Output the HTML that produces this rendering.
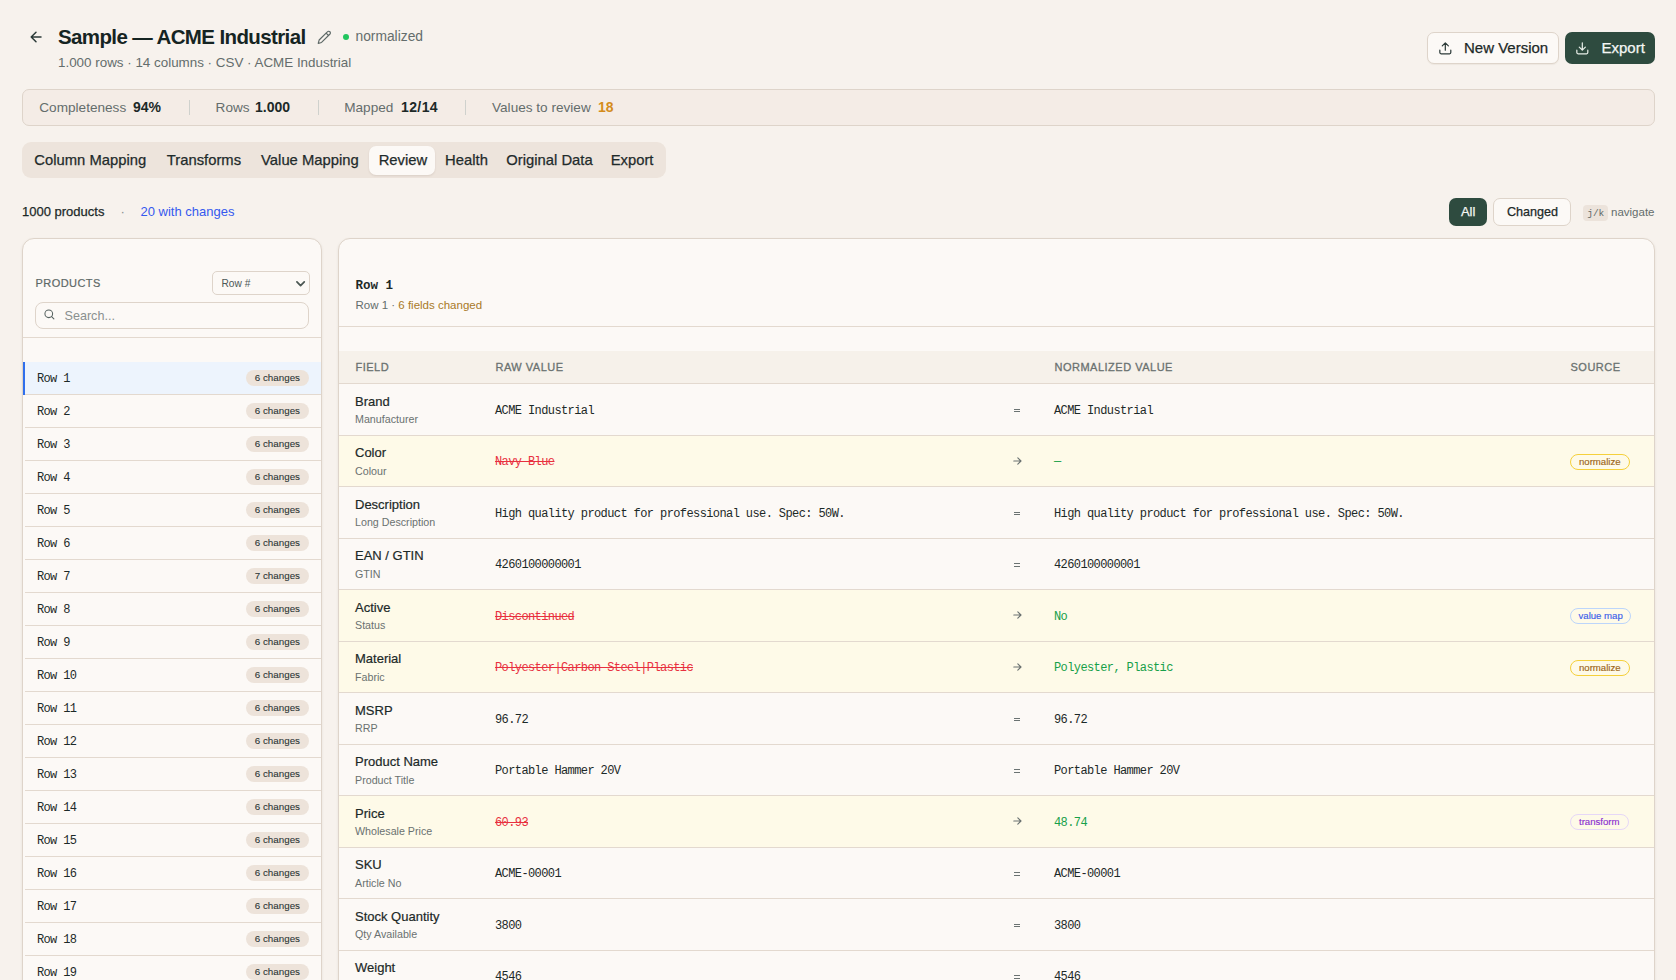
<!DOCTYPE html>
<html><head><meta charset="utf-8">
<style>
*{box-sizing:border-box;margin:0;padding:0}
html,body{width:1676px;height:980px;overflow:hidden;background:#f7f2ed;font-family:"Liberation Sans",sans-serif;color:#1c2928}
.abs{position:absolute}
.t{position:absolute;white-space:pre;line-height:20px}
.med{-webkit-text-stroke:0.25px currentColor}
.mono{font-family:"Liberation Mono",monospace}
svg{position:absolute;overflow:visible}
/* stats */
.stats{left:22px;top:89px;width:1633px;height:37px;background:#f4ece6;border:1px solid #ded4ca;border-radius:7px}
.sdiv{position:absolute;top:9.5px;width:1px;height:15.5px;background:#cfd1cd}
/* tabs */
.tabs{left:22px;top:142px;width:644px;height:36px;background:#ede4dc;border-radius:9px}
.tab{position:absolute;-webkit-text-stroke:.25px currentColor;top:4px;height:29px;font-size:14.8px;line-height:29px;white-space:pre;color:#1f2b2b}
.btn{position:absolute;border-radius:7px}
.panel{background:#fcf9f6;border:1px solid #ded4ca;border-radius:12px;overflow:hidden;box-shadow:0 1px 3px rgba(70,50,30,.08)}
.lrow{position:absolute;left:2px;width:296px;height:33px;border-bottom:1px solid #e3d9cf}
.lrow .n{position:absolute;left:12px;top:1px;line-height:32px;font-size:12px;letter-spacing:-0.65px;font-family:"Liberation Mono",monospace;color:#1c2928}
.lrow .b{position:absolute;-webkit-text-stroke:.08px currentColor;right:12px;top:8px;height:16px;line-height:16px;padding:0 9px;border-radius:8px;background:#ede3da;font-size:9.8px;color:#2a3434}
.row{position:absolute;left:0;width:1315px;height:51.5px;border-top:1px solid #e3d9cf}
.row.hl{background:#fefae8}
.row .l{position:absolute;-webkit-text-stroke:.2px currentColor;left:16px;top:9.6px;font-size:13px;line-height:16px;color:#1c2928}
.row .s{position:absolute;left:16px;top:29.4px;font-size:10.7px;line-height:12px;color:#6a7170}
.row .v{position:absolute;top:18.6px;left:156px;font-size:12px;letter-spacing:-0.6px;line-height:16px;font-family:"Liberation Mono",monospace;color:#1c2928}
.row .nv{position:absolute;top:18.6px;left:715px;font-size:12px;letter-spacing:-0.6px;line-height:16px;font-family:"Liberation Mono",monospace;color:#1c2928}
.row .eq{position:absolute;top:20.3px;left:674px;font-size:11px;line-height:16px;font-family:"Liberation Mono",monospace;color:#6a7170}
.row .del{color:#e8303f;text-decoration:line-through}
.row .add{color:#17a04a}
.badge{position:absolute;left:1231px;top:18px;height:16px;line-height:14px;border-radius:8px;padding:0 8px;font-size:9.6px;border:1px solid;-webkit-text-stroke:.15px currentColor}
.hdr{position:absolute;font-size:11px;-webkit-text-stroke:.3px currentColor;letter-spacing:.5px;color:#6a7170;line-height:14px;top:9px}
</style></head><body>

<!-- header -->
<svg style="left:30px;top:31px" width="12" height="12" viewBox="0 0 12 12"><path d="M11 6H1.2M6 1.2L1.2 6L6 10.8" fill="none" stroke="#2c3a38" stroke-width="1.5" stroke-linecap="round" stroke-linejoin="round"/></svg>
<div class="t" style="left:58px;top:26.7px;font-size:20.5px;line-height:20px;font-weight:700;letter-spacing:-0.62px;color:#152422">Sample — ACME Industrial</div>
<svg style="left:317px;top:29.6px" width="14.6" height="14.6" viewBox="0 0 24 24"><path d="M17 3a2.85 2.83 0 1 1 4 4L7.5 20.5 2 22l1.5-5.5Z M15 5l4 4" fill="none" stroke="#5d6866" stroke-width="1.9" stroke-linecap="round" stroke-linejoin="round"/></svg>
<div class="abs" style="left:343px;top:34px;width:6px;height:6px;border-radius:3px;background:#22c55e"></div>
<div class="t" style="left:355.5px;top:26.5px;font-size:13.8px;color:#646d6c">normalized</div>
<div class="t" style="left:58px;top:53.1px;font-size:13.4px;color:#646d6c">1.000 rows · 14 columns · CSV · ACME Industrial</div>

<div class="btn" style="left:1427px;top:32px;width:132px;height:32px;background:#fcf9f6;border:1px solid #ded4ca;box-shadow:0 1px 1px rgba(80,60,40,.06)"></div>
<svg style="left:1437.98px;top:40.78px" width="14.64" height="14.64" viewBox="0 0 24 24"><path d="M21 15v4a2 2 0 0 1-2 2H5a2 2 0 0 1-2-2v-4M17 8l-5-5-5 5M12 3v12" fill="none" stroke="#2c3a38" stroke-width="2" stroke-linecap="round" stroke-linejoin="round"/></svg>
<div class="t med" style="left:1464px;top:37.7px;font-size:15px;color:#1c2928">New Version</div>
<div class="btn" style="left:1565px;top:32px;width:90px;height:32px;background:#2e4b3f"></div>
<svg style="left:1575.08px;top:40.78px" width="14.64" height="14.64" viewBox="0 0 24 24"><path d="M21 15v4a2 2 0 0 1-2 2H5a2 2 0 0 1-2-2v-4M7 10l5 5 5-5M12 15V3" fill="none" stroke="#e8efe9" stroke-width="2" stroke-linecap="round" stroke-linejoin="round"/></svg>
<div class="t med" style="left:1601.5px;top:37.7px;font-size:15px;color:#f4f7f4">Export</div>

<!-- stats bar -->
<div class="abs stats">
  <div class="t" style="left:16.3px;top:7.5px;font-size:13.6px;color:#646d6c">Completeness</div>
  <div class="t" style="left:110px;top:7.3px;font-size:14px;font-weight:700;color:#1c2928">94%</div>
  <div class="sdiv" style="left:166px"></div>
  <div class="t" style="left:192.6px;top:7.5px;font-size:13.6px;color:#646d6c">Rows</div>
  <div class="t" style="left:232px;top:7.3px;font-size:14px;font-weight:700;color:#1c2928">1.000</div>
  <div class="sdiv" style="left:295px"></div>
  <div class="t" style="left:321.2px;top:7.5px;font-size:13.6px;color:#646d6c">Mapped</div>
  <div class="t" style="left:378px;top:7.3px;font-size:14px;font-weight:700;color:#1c2928;letter-spacing:.4px">12/14</div>
  <div class="sdiv" style="left:442px"></div>
  <div class="t" style="left:469px;top:7.5px;font-size:13.6px;color:#646d6c">Values to review</div>
  <div class="t" style="left:575px;top:7.3px;font-size:14px;font-weight:700;color:#d48c1c">18</div>
</div>

<!-- tabs -->
<div class="abs tabs">
  <div class="abs" style="left:347px;top:4px;width:66px;height:29px;background:#fcf9f6;border-radius:7px;box-shadow:0 1px 2px rgba(80,60,40,.12)"></div>
  <div class="tab" style="left:12.3px">Column Mapping</div>
  <div class="tab" style="left:144.8px">Transforms</div>
  <div class="tab" style="left:239.1px">Value Mapping</div>
  <div class="tab" style="left:356.7px">Review</div>
  <div class="tab" style="left:423.1px">Health</div>
  <div class="tab" style="left:484.3px">Original Data</div>
  <div class="tab" style="left:588.7px">Export</div>
</div>

<!-- products line -->
<div class="t med" style="left:22px;top:201.5px;font-size:13px;color:#1c2928">1000 products</div>
<div class="t" style="left:120.5px;top:201.5px;font-size:13px;color:#8b9190">·</div>
<div class="t" style="left:140.5px;top:201.5px;font-size:13px;color:#3559ef">20 with changes</div>

<div class="btn" style="left:1449px;top:198px;width:38px;height:28px;background:#2e4b3f;border-radius:7px"></div>
<div class="t med" style="left:1460.9px;top:201.5px;font-size:13px;color:#f4f7f4">All</div>
<div class="btn" style="left:1493px;top:198px;width:78px;height:28px;background:#fcf9f6;border:1px solid #ded4ca;border-radius:7px"></div>
<div class="t med" style="left:1507px;top:201.5px;font-size:12.6px;color:#1c2928">Changed</div>
<div class="abs" style="left:1583px;top:205px;width:25px;height:16px;background:#ece3db;border-radius:4px"></div>
<div class="t mono" style="left:1587.2px;top:203.8px;font-size:9.5px;color:#5d6866">j/k</div>
<div class="t" style="left:1611px;top:201.7px;font-size:11.5px;color:#646d6c">navigate</div>

<!-- left panel -->
<div class="abs panel" style="left:22px;top:238px;width:300px;height:760px">
  <div class="t" style="left:12.5px;top:34px;font-size:11px;-webkit-text-stroke:.2px currentColor;letter-spacing:.45px;color:#5d6866">PRODUCTS</div>
  <div class="abs" style="left:189.3px;top:32px;width:97.3px;height:24px;border:1px solid #ded4ca;border-radius:5px;background:#fcf9f6"></div>
  <div class="t" style="left:198.5px;top:35px;font-size:10.2px;color:#4d5856">Row #</div>
  <svg style="left:272.6px;top:41.6px" width="9.2" height="5.6" viewBox="0 0 10 6"><path d="M1 1l4 4 4-4" fill="none" stroke="#4b5753" stroke-width="1.9" stroke-linecap="round" stroke-linejoin="round"/></svg>
  <div class="abs" style="left:12.2px;top:62.5px;width:273.4px;height:27.5px;border:1px solid #ded4ca;border-radius:8px;background:#fcf9f6"></div>
  <svg style="left:21.2px;top:70.4px" width="11" height="11" viewBox="0 0 12 12"><circle cx="5.2" cy="5.2" r="4.2" fill="none" stroke="#55615f" stroke-width="1.15"/><path d="M8.3 8.3l2.5 2.5" stroke="#55615f" stroke-width="1.15" stroke-linecap="round"/></svg>
  <div class="t" style="left:41.5px;top:66.6px;font-size:12.6px;color:#8a908f">Search...</div>
  <div class="abs" style="left:0;top:98px;width:300px;height:1px;background:#e3d9cf"></div>
  <div class="lrow" style="top:123px;background:#edf4fd;box-shadow:-2px 0 0 #2f6fec"><div class="n">Row 1</div><div class="b">6 changes</div></div>
<div class="lrow" style="top:156px"><div class="n">Row 2</div><div class="b">6 changes</div></div>
<div class="lrow" style="top:189px"><div class="n">Row 3</div><div class="b">6 changes</div></div>
<div class="lrow" style="top:222px"><div class="n">Row 4</div><div class="b">6 changes</div></div>
<div class="lrow" style="top:255px"><div class="n">Row 5</div><div class="b">6 changes</div></div>
<div class="lrow" style="top:288px"><div class="n">Row 6</div><div class="b">6 changes</div></div>
<div class="lrow" style="top:321px"><div class="n">Row 7</div><div class="b">7 changes</div></div>
<div class="lrow" style="top:354px"><div class="n">Row 8</div><div class="b">6 changes</div></div>
<div class="lrow" style="top:387px"><div class="n">Row 9</div><div class="b">6 changes</div></div>
<div class="lrow" style="top:420px"><div class="n">Row 10</div><div class="b">6 changes</div></div>
<div class="lrow" style="top:453px"><div class="n">Row 11</div><div class="b">6 changes</div></div>
<div class="lrow" style="top:486px"><div class="n">Row 12</div><div class="b">6 changes</div></div>
<div class="lrow" style="top:519px"><div class="n">Row 13</div><div class="b">6 changes</div></div>
<div class="lrow" style="top:552px"><div class="n">Row 14</div><div class="b">6 changes</div></div>
<div class="lrow" style="top:585px"><div class="n">Row 15</div><div class="b">6 changes</div></div>
<div class="lrow" style="top:618px"><div class="n">Row 16</div><div class="b">6 changes</div></div>
<div class="lrow" style="top:651px"><div class="n">Row 17</div><div class="b">6 changes</div></div>
<div class="lrow" style="top:684px"><div class="n">Row 18</div><div class="b">6 changes</div></div>
<div class="lrow" style="top:717px"><div class="n">Row 19</div><div class="b">6 changes</div></div>
<div class="lrow" style="top:750px"><div class="n">Row 20</div><div class="b">6 changes</div></div>
<div class="lrow" style="top:783px"><div class="n">Row 21</div><div class="b">6 changes</div></div>
</div>

<!-- right panel -->
<div class="abs panel" style="left:338px;top:238px;width:1317px;height:760px">
  <div class="t mono" style="left:16.5px;top:36.7px;font-size:12.5px;font-weight:700;color:#1c2928">Row 1</div>
  <div class="t" style="left:16.5px;top:56px;font-size:11.5px;color:#646d6c">Row 1 · <span style="color:#a97a28">6 fields changed</span></div>
  <div class="abs" style="left:0;top:87px;width:1317px;height:1px;background:#e3d9cf"></div>
  <div class="abs" style="left:0;top:112px;width:1317px;height:33px;background:#f6f1ea"></div>
  <div class="hdr" style="left:16.5px;top:121px">FIELD</div>
  <div class="hdr" style="left:156.5px;top:121px">RAW VALUE</div>
  <div class="hdr" style="left:715.5px;top:121px">NORMALIZED VALUE</div>
  <div class="hdr" style="left:1231.5px;top:121px">SOURCE</div>
  <div class="row" style="top:144px"><div class="t l">Brand</div><div class="t s">Manufacturer</div><div class="t v">ACME Industrial</div><div class="abs" style="left:674.6px;top:24.6px;width:6.2px;height:1.1px;background:#6b7372"></div><div class="abs" style="left:674.6px;top:27.3px;width:6.2px;height:1.1px;background:#6b7372"></div><div class="t nv">ACME Industrial</div></div>
<div class="row hl" style="top:195.5px"><div class="t l">Color</div><div class="t s">Colour</div><div class="t v del">Navy Blue</div><svg style="left:674px;top:21.2px" width="9" height="8" viewBox="0 0 9 8"><path d="M.8 4h7.2M4.8.8L8 4 4.8 7.2" fill="none" stroke="#6a7170" stroke-width="1.1" stroke-linecap="round" stroke-linejoin="round"/></svg><div class="t nv add">—</div><div class="t badge" style="border-color:#f5d03c;color:#9c6518;padding:0 8px">normalize</div></div>
<div class="row" style="top:247px"><div class="t l">Description</div><div class="t s">Long Description</div><div class="t v">High quality product for professional use. Spec: 50W.</div><div class="abs" style="left:674.6px;top:24.6px;width:6.2px;height:1.1px;background:#6b7372"></div><div class="abs" style="left:674.6px;top:27.3px;width:6.2px;height:1.1px;background:#6b7372"></div><div class="t nv">High quality product for professional use. Spec: 50W.</div></div>
<div class="row" style="top:298.5px"><div class="t l">EAN / GTIN</div><div class="t s">GTIN</div><div class="t v">4260100000001</div><div class="abs" style="left:674.6px;top:24.6px;width:6.2px;height:1.1px;background:#6b7372"></div><div class="abs" style="left:674.6px;top:27.3px;width:6.2px;height:1.1px;background:#6b7372"></div><div class="t nv">4260100000001</div></div>
<div class="row hl" style="top:350px"><div class="t l">Active</div><div class="t s">Status</div><div class="t v del">Discontinued</div><svg style="left:674px;top:21.2px" width="9" height="8" viewBox="0 0 9 8"><path d="M.8 4h7.2M4.8.8L8 4 4.8 7.2" fill="none" stroke="#6a7170" stroke-width="1.1" stroke-linecap="round" stroke-linejoin="round"/></svg><div class="t nv add">No</div><div class="t badge" style="border-color:#bcd5fb;color:#3a5ee8;padding:0 7.5px">value map</div></div>
<div class="row hl" style="top:401.5px"><div class="t l">Material</div><div class="t s">Fabric</div><div class="t v del">Polyester|Carbon Steel|Plastic</div><svg style="left:674px;top:21.2px" width="9" height="8" viewBox="0 0 9 8"><path d="M.8 4h7.2M4.8.8L8 4 4.8 7.2" fill="none" stroke="#6a7170" stroke-width="1.1" stroke-linecap="round" stroke-linejoin="round"/></svg><div class="t nv add">Polyester, Plastic</div><div class="t badge" style="border-color:#f5d03c;color:#9c6518;padding:0 8px">normalize</div></div>
<div class="row" style="top:453px"><div class="t l">MSRP</div><div class="t s">RRP</div><div class="t v">96.72</div><div class="abs" style="left:674.6px;top:24.6px;width:6.2px;height:1.1px;background:#6b7372"></div><div class="abs" style="left:674.6px;top:27.3px;width:6.2px;height:1.1px;background:#6b7372"></div><div class="t nv">96.72</div></div>
<div class="row" style="top:504.5px"><div class="t l">Product Name</div><div class="t s">Product Title</div><div class="t v">Portable Hammer 20V</div><div class="abs" style="left:674.6px;top:24.6px;width:6.2px;height:1.1px;background:#6b7372"></div><div class="abs" style="left:674.6px;top:27.3px;width:6.2px;height:1.1px;background:#6b7372"></div><div class="t nv">Portable Hammer 20V</div></div>
<div class="row hl" style="top:556px"><div class="t l">Price</div><div class="t s">Wholesale Price</div><div class="t v del">60.93</div><svg style="left:674px;top:21.2px" width="9" height="8" viewBox="0 0 9 8"><path d="M.8 4h7.2M4.8.8L8 4 4.8 7.2" fill="none" stroke="#6a7170" stroke-width="1.1" stroke-linecap="round" stroke-linejoin="round"/></svg><div class="t nv add">48.74</div><div class="t badge" style="border-color:#e6d7f7;color:#8a2fd0;padding:0 8px">transform</div></div>
<div class="row" style="top:607.5px"><div class="t l">SKU</div><div class="t s">Article No</div><div class="t v">ACME-00001</div><div class="abs" style="left:674.6px;top:24.6px;width:6.2px;height:1.1px;background:#6b7372"></div><div class="abs" style="left:674.6px;top:27.3px;width:6.2px;height:1.1px;background:#6b7372"></div><div class="t nv">ACME-00001</div></div>
<div class="row" style="top:659px"><div class="t l">Stock Quantity</div><div class="t s">Qty Available</div><div class="t v">3800</div><div class="abs" style="left:674.6px;top:24.6px;width:6.2px;height:1.1px;background:#6b7372"></div><div class="abs" style="left:674.6px;top:27.3px;width:6.2px;height:1.1px;background:#6b7372"></div><div class="t nv">3800</div></div>
<div class="row" style="top:710.5px"><div class="t l">Weight</div><div class="t s">Weight (g)</div><div class="t v">4546</div><div class="abs" style="left:674.6px;top:24.6px;width:6.2px;height:1.1px;background:#6b7372"></div><div class="abs" style="left:674.6px;top:27.3px;width:6.2px;height:1.1px;background:#6b7372"></div><div class="t nv">4546</div></div>
</div>

</body></html>
